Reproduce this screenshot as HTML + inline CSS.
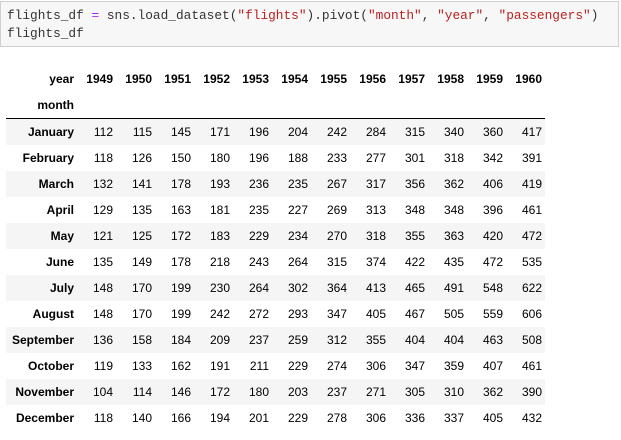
<!DOCTYPE html>
<html><head><style>
body{margin:0;width:621px;height:440px;background:#fff;position:relative;overflow:hidden;font-family:"Liberation Sans",Arial,sans-serif}
.code{position:absolute;left:0;top:1px;width:619px;border:1px solid #cfcfcf;background:#f7f7f7;font-family:"Liberation Mono",monospace;font-size:12.8px;line-height:18px;padding:5px 0 0 6px;box-sizing:border-box;height:46px;color:#333;white-space:nowrap}
.s{color:#ba2121}.o{color:#aa22ff}
table{position:absolute;left:6px;top:66px;border-collapse:collapse;font-size:12px;color:#000;table-layout:fixed}
td,th{padding:0;text-align:right;height:26px;width:39px}
th{font-weight:bold}
td.l,th.l{width:68px}
tr.h th{height:26px}
tr.hb th{border-bottom:1px solid #000}
tbody tr:nth-child(odd){background:#f5f5f5}
td:last-child,th:last-child{padding-right:3px}
</style></head><body>
<div class="code">flights_df <span class="o">=</span> sns.load_dataset(<span class="s">"flights"</span>).pivot(<span class="s">"month"</span>, <span class="s">"year"</span>, <span class="s">"passengers"</span>)<br>flights_df</div>
<table>
<thead>
<tr class="h"><th class="l">year</th><th>1949</th><th>1950</th><th>1951</th><th>1952</th><th>1953</th><th>1954</th><th>1955</th><th>1956</th><th>1957</th><th>1958</th><th>1959</th><th>1960</th></tr>
<tr class="h hb"><th class="l">month</th><th></th><th></th><th></th><th></th><th></th><th></th><th></th><th></th><th></th><th></th><th></th><th></th></tr>
</thead>
<tbody>
<tr><th class="l">January</th><td>112</td><td>115</td><td>145</td><td>171</td><td>196</td><td>204</td><td>242</td><td>284</td><td>315</td><td>340</td><td>360</td><td>417</td></tr>
<tr><th class="l">February</th><td>118</td><td>126</td><td>150</td><td>180</td><td>196</td><td>188</td><td>233</td><td>277</td><td>301</td><td>318</td><td>342</td><td>391</td></tr>
<tr><th class="l">March</th><td>132</td><td>141</td><td>178</td><td>193</td><td>236</td><td>235</td><td>267</td><td>317</td><td>356</td><td>362</td><td>406</td><td>419</td></tr>
<tr><th class="l">April</th><td>129</td><td>135</td><td>163</td><td>181</td><td>235</td><td>227</td><td>269</td><td>313</td><td>348</td><td>348</td><td>396</td><td>461</td></tr>
<tr><th class="l">May</th><td>121</td><td>125</td><td>172</td><td>183</td><td>229</td><td>234</td><td>270</td><td>318</td><td>355</td><td>363</td><td>420</td><td>472</td></tr>
<tr><th class="l">June</th><td>135</td><td>149</td><td>178</td><td>218</td><td>243</td><td>264</td><td>315</td><td>374</td><td>422</td><td>435</td><td>472</td><td>535</td></tr>
<tr><th class="l">July</th><td>148</td><td>170</td><td>199</td><td>230</td><td>264</td><td>302</td><td>364</td><td>413</td><td>465</td><td>491</td><td>548</td><td>622</td></tr>
<tr><th class="l">August</th><td>148</td><td>170</td><td>199</td><td>242</td><td>272</td><td>293</td><td>347</td><td>405</td><td>467</td><td>505</td><td>559</td><td>606</td></tr>
<tr><th class="l">September</th><td>136</td><td>158</td><td>184</td><td>209</td><td>237</td><td>259</td><td>312</td><td>355</td><td>404</td><td>404</td><td>463</td><td>508</td></tr>
<tr><th class="l">October</th><td>119</td><td>133</td><td>162</td><td>191</td><td>211</td><td>229</td><td>274</td><td>306</td><td>347</td><td>359</td><td>407</td><td>461</td></tr>
<tr><th class="l">November</th><td>104</td><td>114</td><td>146</td><td>172</td><td>180</td><td>203</td><td>237</td><td>271</td><td>305</td><td>310</td><td>362</td><td>390</td></tr>
<tr><th class="l">December</th><td>118</td><td>140</td><td>166</td><td>194</td><td>201</td><td>229</td><td>278</td><td>306</td><td>336</td><td>337</td><td>405</td><td>432</td></tr>
</tbody>
</table>
</body></html>
